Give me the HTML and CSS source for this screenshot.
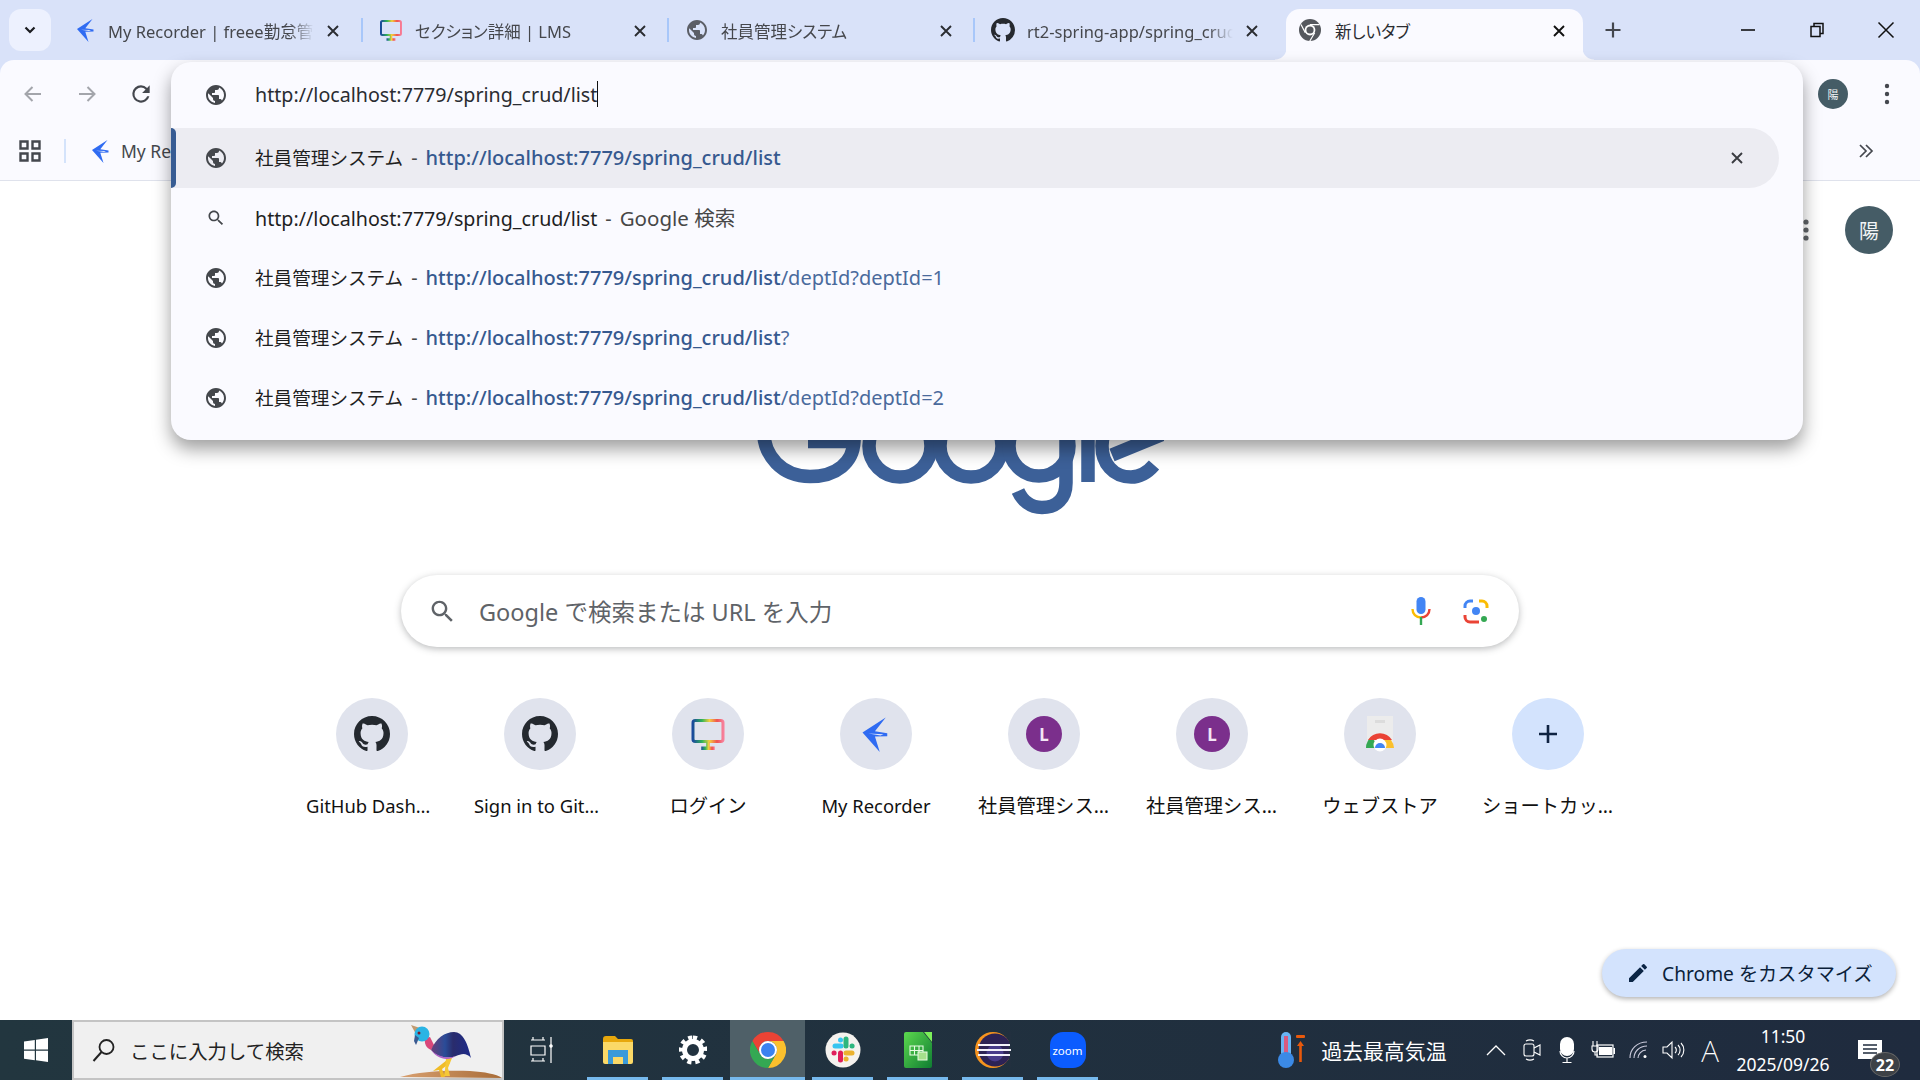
FILE: index.html
```html
<!DOCTYPE html>
<html lang="ja">
<head>
<meta charset="utf-8">
<title>新しいタブ</title>
<link rel="stylesheet" href="styles.css">
</head>
<body>
<svg class="defs" width="0" height="0" aria-hidden="true">
  <symbol id="globe" viewBox="0 0 24 24"><path d="M12 2C6.48 2 2 6.48 2 12s4.48 10 10 10 10-4.48 10-10S17.52 2 12 2zm-1 17.93c-3.95-.49-7-3.85-7-7.93 0-.62.08-1.21.21-1.79L9 15v1c0 1.1.9 2 2 2v1.93zm6.9-2.54c-.26-.81-1-1.39-1.9-1.39h-1v-3c0-.55-.45-1-1-1H8v-2h2c.55 0 1-.45 1-1V7h2c1.1 0 2-.9 2-2v-.41c2.93 1.19 5 4.06 5 7.41 0 2.08-.8 3.97-2.1 5.39z"/></symbol>
  <symbol id="search" viewBox="0 0 24 24"><path d="M15.5 14h-.79l-.28-.27C15.41 12.59 16 11.11 16 9.5 16 5.91 13.09 3 9.5 3S3 5.91 3 9.5 5.91 16 9.5 16c1.61 0 3.09-.59 4.23-1.57l.27.28v.79l5 4.99L20.49 19l-4.99-5zm-6 0C7.01 14 5 11.99 5 9.5S7.01 5 9.5 5 14 7.01 14 9.5 11.99 14 9.5 14z"/></symbol>
  <symbol id="x" viewBox="0 0 14 14"><path d="M2 2l10 10M12 2L2 12" fill="none" stroke="currentColor" stroke-width="1.9"/></symbol>
  <symbol id="github" viewBox="0 0 16 16"><path d="M8 0C3.58 0 0 3.58 0 8c0 3.54 2.29 6.53 5.47 7.59.4.07.55-.17.55-.38 0-.19-.01-.82-.01-1.49-2.01.37-2.53-.49-2.69-.94-.09-.23-.48-.94-.82-1.13-.28-.15-.68-.52-.01-.53.63-.01 1.08.58 1.23.82.72 1.21 1.87.87 2.33.66.07-.52.28-.87.51-1.07-1.78-.2-3.64-.89-3.64-3.95 0-.87.31-1.59.82-2.15-.08-.2-.36-1.02.08-2.12 0 0 .67-.21 2.2.82.64-.18 1.32-.27 2-.27.68 0 1.36.09 2 .27 1.53-1.04 2.2-.82 2.2-.82.44 1.1.16 1.92.08 2.12.51.56.82 1.27.82 2.15 0 3.07-1.87 3.75-3.65 3.95.29.25.54.73.54 1.48 0 1.07-.01 1.93-.01 2.2 0 .21.15.46.55.38A8.013 8.013 0 0016 8c0-4.42-3.58-8-8-8z"/></symbol>
  <symbol id="freee" viewBox="0 0 24 24"><path fill="#2f6bf2" d="M3 11L18.500 1l-7.200 9.200L19.500 11.500v2l-8.200.2L14.500 24z"/><path fill="#dfe8fb" d="M7 11.700l10 .4-2 .9z"/></symbol>
  <symbol id="monitor" viewBox="0 0 24 24"><defs><linearGradient id="rb" x1="0" x2="1" y1="0" y2="0"><stop offset="0" stop-color="#1a4a9c"/><stop offset=".3" stop-color="#2fb457"/><stop offset=".55" stop-color="#f4d03f"/><stop offset=".8" stop-color="#f0524f"/><stop offset="1" stop-color="#f77f9a"/></linearGradient></defs><rect x="2" y="3" width="20" height="14" rx="1.5" fill="none" stroke="url(#rb)" stroke-width="2"/><path d="M12 17v4M7.5 21.500h9" fill="none" stroke="url(#rb)" stroke-width="2.400"/></symbol>
  <symbol id="chrome" viewBox="0 0 36 36"><path fill="#ea4335" d="M18 0A18 18 0 0 0 2.400 9l7.800 13.500A9 9 0 0 1 18 9h15.600A18 18 0 0 0 18 0z"/><path fill="#fbc02d" d="M33.600 9H18a9 9 0 0 1 7.800 13.500L18 36A18 18 0 0 0 33.600 9z"/><path fill="#34a853" d="M2.400 9A18 18 0 0 0 18 36l7.800-13.500a9 9 0 0 1-15.600 0z"/><circle cx="18" cy="18" r="9" fill="#fff"/><circle cx="18" cy="18" r="7" fill="#3b82f0"/></symbol>
</svg>

<header class="tabstrip">
  <button class="tablist" aria-label="タブを検索"><svg width="14" height="14" viewBox="0 0 14 14"><path d="M2.500 4.500L7 9l4.500-4.500" fill="none" stroke="#1b1c20" stroke-width="2.200"/></svg></button>
  <div class="tab">
    <svg class="fav"><use href="#freee"/></svg>
    <span class="tab-title">My Recorder | freee勤怠管理 Plus</span>
    <svg class="tab-x"><use href="#x"/></svg>
  </div>
  <div class="tab">
    <svg class="fav"><use href="#monitor"/></svg>
    <span class="tab-title">セクション詳細 | LMS</span>
    <svg class="tab-x"><use href="#x"/></svg>
  </div>
  <div class="tab">
    <svg class="fav grey"><use href="#globe"/></svg>
    <span class="tab-title">社員管理システム</span>
    <svg class="tab-x"><use href="#x"/></svg>
  </div>
  <div class="tab no-sep">
    <svg class="fav dark"><use href="#github"/></svg>
    <span class="tab-title">rt2-spring-app/spring_crud</span>
    <svg class="tab-x"><use href="#x"/></svg>
  </div>
  <div class="tab active">
    <svg class="fav" viewBox="0 0 24 24"><circle cx="12" cy="12" r="11" fill="#55585e"/><circle cx="12" cy="12" r="5.400" fill="#fff"/><circle cx="12" cy="12" r="3.600" fill="#55585e"/><path d="M12 6.600h9.500M7.300 14.700L3 6.500M16.700 14.700l-5 8.500" stroke="#fff" stroke-width="1.200" fill="none"/></svg>
    <span class="tab-title">新しいタブ</span>
    <svg class="tab-x"><use href="#x"/></svg>
  </div>
  <svg class="newtab" width="20" height="20" viewBox="0 0 20 20"><path d="M10 2.500v15M2.500 10h15" stroke="#44474e" stroke-width="2.200"/></svg>
  <div class="winctl">
    <span class="winbtn"><svg width="14" height="14" viewBox="0 0 14 14"><path d="M0 7h14" stroke="#111" stroke-width="1.600"/></svg></span>
    <span class="winbtn"><svg width="16" height="16" viewBox="0 0 16 16"><path d="M2 4.500h9v10H2zM5 4.500V1.500h9v10h-3" fill="none" stroke="#111" stroke-width="1.500"/></svg></span>
    <span class="winbtn"><svg width="18" height="18" viewBox="0 0 18 18"><path d="M1.500 1.500l15 15M16.500 1.500l-15 15" stroke="#111" stroke-width="1.500"/></svg></span>
  </div>
</header>

<nav class="toolbar">
  <span class="tool"><svg width="24" height="24" viewBox="0 0 24 24"><path d="M20 12H5M11.500 5l-7 7 7 7" fill="none" stroke="#a3a5ab" stroke-width="2"/></svg></span>
  <span class="tool"><svg width="24" height="24" viewBox="0 0 24 24"><path d="M4 12h15M12.500 5l7 7-7 7" fill="none" stroke="#a3a5ab" stroke-width="2"/></svg></span>
  <span class="tool"><svg width="26" height="26" viewBox="0 0 24 24"><path fill="#44474e" d="M17.650 6.350A7.958 7.958 0 0 0 12 4a8 8 0 1 0 7.730 10h-2.080A6 6 0 1 1 12 6c1.660 0 3.140.69 4.220 1.780L13 11h7V4l-2.350 2.350z"/></svg></span>
  <div class="tool-end">
    <span class="tool"><span class="avatar small">陽</span></span>
    <span class="tool"><svg width="6" height="22" viewBox="0 0 6 22"><circle cx="3" cy="3" r="2.200" fill="#44474e"/><circle cx="3" cy="11" r="2.200" fill="#44474e"/><circle cx="3" cy="19" r="2.200" fill="#44474e"/></svg></span>
  </div>
</nav>

<nav class="bookmarks">
  <svg class="apps" width="22" height="22" viewBox="0 0 22 22"><path d="M1.500 1.500h7v7h-7zM13.500 1.500h7v7h-7zM1.500 13.500h7v7h-7zM13.500 13.500h7v7h-7z" fill="none" stroke="#44474e" stroke-width="2.400"/></svg>
  <span class="bm-sep"></span>
  <svg class="bm-fav" width="24" height="24"><use href="#freee"/></svg>
  <span class="bm-label">My Recorder</span>
  <svg class="more" width="18" height="18" viewBox="0 0 18 18"><path d="M3 3l6 6-6 6M9 3l6 6-6 6" fill="none" stroke="#44474e" stroke-width="1.700"/></svg>
</nav>

<main class="ntp">
  <div class="ntp-top">
    <svg width="6" height="24" viewBox="0 0 6 24"><circle cx="3" cy="4" r="2.600" fill="#5f6368"/><circle cx="3" cy="12" r="2.600" fill="#5f6368"/><circle cx="3" cy="20" r="2.600" fill="#5f6368"/></svg>
    <span class="avatar large">陽</span>
  </div>
  <svg class="logo" width="407" height="138" viewBox="755 377 407 138" aria-label="Google" fill="none" stroke="#3c6098" stroke-width="13.500">
    <path d="M806 441.500H852C851 462 835 476.500 808 476.500C780 476.500 761.500 456 761.500 430C761.500 404 780 383.500 808 383.500C822 383.500 833 388 842 396"/>
    <circle cx="898" cy="446" r="31"/>
    <circle cx="969" cy="446" r="31"/>
    <circle cx="1037" cy="446" r="30"/>
    <path d="M1064 416V483C1064 498 1055 507.500 1040 507.500C1028 507.500 1020 500 1016 491"/>
    <path d="M1086 378V482"/>
    <path d="M1152 465C1146 472 1139 477 1129 477C1111 477 1100 463 1100 446C1100 429 1111 415 1128 415C1143 415 1150 425 1154 437L1110 455"/>
  </svg>
  <div class="searchbox">
    <svg class="sb-icon" width="29" height="29"><use href="#search"/></svg>
    <span class="sb-text">Google で検索または URL を入力</span>
    <svg class="sb-mic" width="20" height="28" viewBox="0 0 20 28"><rect x="5.500" y="0" width="9" height="17" rx="4.500" fill="#4285f4"/><path d="M1.500 12c0 5 3.500 8.500 8.500 8.500" fill="none" stroke="#fbbc04" stroke-width="2.400"/><path d="M18.500 12c0 5-3.500 8.500-8.500 8.500" fill="none" stroke="#ea4335" stroke-width="2.400"/><path d="M10 20v8" stroke="#34a853" stroke-width="2.400"/></svg>
    <svg class="sb-lens" width="26" height="26" viewBox="0 0 26 26" fill="none" stroke-width="3"><path d="M2 10V8a5 5 0 0 1 5-5h3" stroke="#4285f4"/><path d="M16 3h3a5 5 0 0 1 5 5v2" stroke="#fbbc04"/><path d="M10 24H7a5 5 0 0 1-5-5v-2" stroke="#ea4335"/><path d="M10 24h6" stroke="#ea4335"/><circle cx="13" cy="13" r="4" fill="#4285f4" stroke="none"/><circle cx="21" cy="21" r="3" fill="#34a853" stroke="none"/></svg>
  </div>
  <div class="shortcuts">
    <div class="tile"><span class="tile-ico"><svg class="tile-svg dark"><use href="#github"/></svg></span><span class="tile-label">GitHub Dashboard</span></div>
    <div class="tile"><span class="tile-ico"><svg class="tile-svg dark"><use href="#github"/></svg></span><span class="tile-label">Sign in to GitHub</span></div>
    <div class="tile"><span class="tile-ico"><svg class="tile-svg"><use href="#monitor"/></svg></span><span class="tile-label jp">ログイン</span></div>
    <div class="tile"><span class="tile-ico"><svg class="tile-svg"><use href="#freee"/></svg></span><span class="tile-label">My Recorder</span></div>
    <div class="tile"><span class="tile-ico"><span class="letter">L</span></span><span class="tile-label jp">社員管理システム一覧</span></div>
    <div class="tile"><span class="tile-ico"><span class="letter">L</span></span><span class="tile-label jp">社員管理システム一覧</span></div>
    <div class="tile"><span class="tile-ico"><svg class="tile-svg" viewBox="0 0 36 36"><path fill="#ececec" d="M5 0h26v32H5z"/><path fill="#dcdcdc" d="M13 4h10v3H13z"/><path fill="#34a853" d="M4 32a14 14 0 0 1 6-11.500L16 32z"/><path fill="#ea4335" d="M6 24a14 14 0 0 1 24 0H18z"/><path fill="#fbc02d" d="M32 32a14 14 0 0 0-3-8H18l6 8z"/><circle cx="18" cy="29" r="6.500" fill="#fff"/><path fill="#4285f4" d="M13 32a5 5 0 0 1 10 0z"/></svg></span><span class="tile-label jp">ウェブストア</span></div>
    <div class="tile"><span class="tile-ico add"><svg width="24" height="24" viewBox="0 0 24 24"><path d="M12 3v18M3 12h18" stroke="#0f2342" stroke-width="2.600"/></svg></span><span class="tile-label jp">ショートカットを追加</span></div>
  </div>
  <div class="customize">
    <svg width="24" height="24" viewBox="0 0 24 24"><path fill="#0b2545" d="M3 17.250V21h3.750L17.810 9.940l-3.750-3.750L3 17.250zM20.710 7.040a1 1 0 0 0 0-1.410l-2.340-2.340a1 1 0 0 0-1.410 0l-1.830 1.830 3.750 3.750 1.830-1.830z"/></svg>
    <span>Chrome をカスタマイズ</span>
  </div>
</main>

<footer class="taskbar">
  <span class="start"><svg width="24" height="24" viewBox="0 0 24 24"><path fill="#fff" d="M0 3.400L10.800 1.900V11.500H0zM12 1.700L24 0V11.500H12zM0 12.700H10.800V22.300L0 20.700zM12 12.700H24V24L12 22.300z"/></svg></span>
  <div class="winsearch">
    <svg width="26" height="26" viewBox="0 0 26 26"><circle cx="15.500" cy="10" r="7" fill="none" stroke="#222" stroke-width="1.800"/><path d="M10.500 15L2.500 24" stroke="#222" stroke-width="2"/></svg>
    <span class="ws-text">ここに入力して検索</span>
    <svg class="bird" width="102" height="56" viewBox="0 2 102 56">
      <defs>
        <linearGradient id="bodyg" x1="0" x2="1" y1="0" y2="0"><stop offset="0" stop-color="#6a3f78"/><stop offset=".35" stop-color="#2a4c98"/><stop offset=".55" stop-color="#2a2c6c"/><stop offset="1" stop-color="#1c2a8a"/></linearGradient>
        <linearGradient id="moundg" x1="0" x2="1" y1="0" y2="0"><stop offset="0" stop-color="#d8a070"/><stop offset="1" stop-color="#a86c38"/></linearGradient>
      </defs>
      <path d="M0 57C20 51 50 50 70 51C85 52 96 54 102 58z" fill="url(#moundg)"/>
      <path d="M47 40l3 3-8 6 3 8h-4l-2-7-6 1z" fill="#f0bc28"/>
      <path d="M52 38l-4 10 2 8h-6l1-6 1-12z" fill="#f5c836"/>
      <path d="M25 18c-1 5 1 10 6 12l3-5-4-8z" fill="#d9487a"/>
      <path d="M31 30C36 18 45 12 54 12C63 12 68 24 71 38C66 32 61 34 56 36C48 39 38 38 31 30z" fill="url(#bodyg)"/>
      <path d="M31 30C38 37 48 39 56 36L52 38C44 41 36 37 31 30z" fill="#b060c8"/>
      <path d="M11 5l12 4-6 7z" fill="#c09a70"/>
      <circle cx="22" cy="14" r="7.500" fill="#2ab4e4"/>
      <path d="M15 15l4 3-3 7-2-4z" fill="#3a5a90"/>
      <circle cx="19" cy="13" r="1.500" fill="#7a1a2a"/>
    </svg>
  </div>
  <span class="taskview"><svg width="24" height="26" viewBox="0 0 24 26" fill="none" stroke="#fff" stroke-width="1.200"><path d="M1 3h14M3 3V0M13 3V0M1 9h14v9H1zM1 24h14M3 24v-3M13 24v-3M21 0v26"/><circle cx="21" cy="9" r="1.200" fill="#fff"/></svg></span>
  <span class="tb-app"><svg width="32" height="30" viewBox="0 0 32 30"><path fill="#e8a80c" d="M1 4a3 3 0 0 1 3-3h9l3 3h13a2 2 0 0 1 2 2v4H1z"/><path fill="#fbd967" d="M1 7h30v20a2 2 0 0 1-2 2H3a2 2 0 0 1-2-2z"/><path fill="#3a9ad9" d="M6 15h20v14h-5v-7H11v7H6z"/></svg></span>
  <span class="tb-app"><svg width="28" height="30" viewBox="0 0 28 30"><path fill="none" stroke="#fff" stroke-width="5" d="M14 6.500a8.500 8.500 0 1 0 0 17 8.500 8.500 0 0 0 0-17z"/><path stroke="#fff" stroke-width="5" stroke-dasharray="4 3.800" fill="none" d="M14 3a12 12 0 1 1 0 24 12 12 0 0 1 0-24z"/></svg></span>
  <span class="tb-app current"><svg width="36" height="36"><use href="#chrome"/></svg></span>
  <span class="tb-app"><svg width="36" height="36" viewBox="0 0 36 36"><circle cx="18" cy="18" r="17.500" fill="#f5f2ee"/><g stroke-width="5" stroke-linecap="round" fill="none"><path d="M10 14h6" stroke="#36c5f0"/><path d="M15.500 8v.1" stroke="#36c5f0"/><path d="M21 7v7" stroke="#2eb67d"/><path d="M27 14h.1" stroke="#2eb67d"/><path d="M21 21h6" stroke="#ecb22e"/><path d="M21 27h.1" stroke="#ecb22e"/><path d="M15.500 21v7" stroke="#e01e5a"/><path d="M9 21h.1" stroke="#e01e5a"/></g></svg></span>
  <span class="tb-app"><svg width="28" height="36" viewBox="0 0 28 36"><defs><linearGradient id="calc" x1="0" x2="1" y1="0" y2="1"><stop offset="0" stop-color="#5cd84e"/><stop offset="1" stop-color="#0f7d32"/></linearGradient></defs><path fill="url(#calc)" d="M2 0h17l9 11v23a2 2 0 0 1-2 2H2a2 2 0 0 1-2-2V2a2 2 0 0 1 2-2z"/><path fill="#7cf05a" d="M20 0h8v10z"/><path d="M6 14h13v9H6zM6 18.500h13M10.500 14v9M15 14v9" fill="none" stroke="#e8fbe3" stroke-width="1.100"/><rect x="14" y="20" width="9" height="8" fill="#a5e08c" stroke="#e8fbe3"/></svg></span>
  <span class="tb-app"><svg width="36" height="36" viewBox="0 0 36 36"><circle cx="18" cy="18" r="18" fill="#f7941e"/><circle cx="20" cy="18" r="16.500" fill="#2c2255"/><rect x="34" y="0" width="2" height="36" fill="#22303f"/><circle cx="20" cy="21" r="8.500" fill="#473a8a"/><path d="M3 13h32M2 18h34M3 23h32" stroke="#f2f0fa" stroke-width="1.800"/></svg></span>
  <span class="tb-app"><span class="zoomapp">zoom</span></span>

  <div class="tray">
    <svg class="thermo" width="30" height="38" viewBox="0 0 30 38"><rect x="5" y="1" width="10" height="26" rx="5" fill="#6ab4f4"/><rect x="8" y="5" width="4" height="20" fill="#d85a80"/><circle cx="10" cy="29" r="8" fill="#3b8ae6"/><rect x="20" y="4" width="9" height="3" rx="1" fill="#e8590c"/><path d="M24.500 10l3.500 5h-2.200v16h-2.600V15H21z" fill="#e8590c"/></svg>
    <span class="weather">過去最高気温</span>
    <div class="tray-icons">
      <span class="tray-slot"><svg width="20" height="12" viewBox="0 0 20 12"><path d="M1 11l9-9 9 9" fill="none" stroke="#fff" stroke-width="1.300"/></svg></span>
      <span class="tray-slot"><svg width="18" height="24" viewBox="0 0 18 24" fill="none" stroke="#fff" stroke-width="1.100"><rect x="1" y="6" width="10" height="12" rx="2"/><path d="M11 10l6-3v10l-6-3M3 3a8 8 0 0 1 8 0M3 21a8 8 0 0 0 8 0"/></svg></span>
      <span class="tray-slot"><svg width="16" height="26" viewBox="0 0 16 26"><rect x="1" y="0" width="14" height="19" rx="7" fill="#fff"/><path d="M1 14a7 7 0 0 0 14 0M8 21v4M3.500 25.500h9" fill="none" stroke="#fff" stroke-width="1.200"/></svg></span>
      <span class="tray-slot"><svg width="24" height="18" viewBox="0 0 24 18"><path d="M2 0v5M6 0v5M1 5h6v3a3 3 0 0 1-6 0zM4 11v3h3" fill="none" stroke="#fff" stroke-width="1.100"/><rect x="6" y="4" width="16" height="12" fill="none" stroke="#fff" stroke-width="1.200"/><rect x="8" y="6" width="13" height="8" fill="#fff"/><rect x="22.500" y="7" width="1.500" height="6" fill="#fff"/></svg></span>
      <span class="tray-slot"><svg width="20" height="18" viewBox="0 0 20 18" fill="none" stroke="#ccd" stroke-width="1.100"><path d="M1 17C1 8 8 1 18 1M5 17C5 11 10 5 18 5M9 17c0-3 3-8 8-8"/><circle cx="16" cy="15.500" r="1.500" fill="#fff" stroke="none"/></svg></span>
      <span class="tray-slot"><svg width="24" height="20" viewBox="0 0 24 20" fill="none" stroke="#fff" stroke-width="1.100"><path d="M1 7h4l5-5v16l-5-5H1zM13 7a4 4 0 0 1 0 6M16 5a7 7 0 0 1 0 10M19 3a10 10 0 0 1 0 14"/></svg></span>
      <span class="tray-slot ime">A</span>
    </div>
    <div class="clock"><span>11:50</span><span>2025/09/26</span></div>
    <div class="notify">
      <svg width="24" height="20" viewBox="0 0 24 20"><path fill="#fff" d="M0 0h24v19H0z"/><path d="M5 5h14M5 9h14M5 13h14" stroke="#1f2b3d" stroke-width="1.600"/></svg>
      <span class="badge">22</span>
    </div>
  </div>
</footer>

<section class="omnibox">
  <div class="omni-input">
    <svg class="omni-ico"><use href="#globe"/></svg>
    <span class="omni-typed">http://localhost:7779/spring_crud/list</span><span class="caret"></span>
  </div>
  <div class="omni-row selected">
    <svg class="omni-ico"><use href="#globe"/></svg>
    <span class="omni-text"><span class="ttl">社員管理システム</span><i class="dash">-</i><b>http://localhost:7779/spring_crud/list</b></span>
    <svg class="omni-x"><use href="#x"/></svg>
  </div>
  <div class="omni-row">
    <svg class="omni-ico small"><use href="#search"/></svg>
    <span class="omni-text">http://localhost:7779/spring_crud/list<i class="dash">-</i><i class="desc">Google 検索</i></span>
  </div>
  <div class="omni-row">
    <svg class="omni-ico"><use href="#globe"/></svg>
    <span class="omni-text"><span class="ttl">社員管理システム</span><i class="dash">-</i><b>http://localhost:7779/spring_crud/list</b><em>/deptId?deptId=1</em></span>
  </div>
  <div class="omni-row">
    <svg class="omni-ico"><use href="#globe"/></svg>
    <span class="omni-text"><span class="ttl">社員管理システム</span><i class="dash">-</i><b>http://localhost:7779/spring_crud/list</b><em>?</em></span>
  </div>
  <div class="omni-row">
    <svg class="omni-ico"><use href="#globe"/></svg>
    <span class="omni-text"><span class="ttl">社員管理システム</span><i class="dash">-</i><b>http://localhost:7779/spring_crud/list</b><em>/deptId?deptId=2</em></span>
  </div>
</section>
</body>
</html>
```
FILE: styles.css
```css
* { box-sizing: border-box; }
html, body { margin: 0; height: 100%; }
body {
  width: 1920px; height: 1080px; overflow: hidden; position: relative;
  display: flex; flex-direction: column;
  background: #d9e2f9; color: #1f1f1f;
  font-family: "Noto Sans", "Noto Sans CJK JP", sans-serif; font-size: 17.5px;
}
.defs { position: absolute; }

/* tab strip */
.tabstrip { height: 60px; flex: none; display: flex; align-items: flex-start; padding: 9px 0 0 9px; }
.tablist { width: 42px; height: 42px; flex: none; margin-right: 7px; border: 0; border-radius: 12px; background: #edf1fe; display: flex; align-items: center; justify-content: center; padding: 0; }
.tab { width: 306px; height: 42px; flex: none; display: flex; align-items: center; padding-left: 16px; position: relative; }
.tab::after { content: ""; position: absolute; right: 0; top: 9px; width: 2px; height: 24px; background: #a8c7fa; }
.tab.no-sep::after { display: none; }
.tab:first-of-type { width: 305px; }
.tab:first-of-type .tab-title { margin-left: -2px; }
.fav { width: 24px; height: 24px; flex: none; margin-right: 12px; }
.fav.grey { fill: #5b5e66; }
.fav.dark { fill: #26292f; }
.tab-title { width: 206px; flex: none; white-space: nowrap; overflow: hidden; color: #45474c; font-size: 16.5px; padding-top: 2px; font-feature-settings: "palt"; -webkit-mask-image: linear-gradient(90deg, #000 88%, transparent); mask-image: linear-gradient(90deg, #000 88%, transparent); }
.tab-x { width: 14px; height: 14px; flex: none; margin-left: 12px; margin-top: 1px; color: #2a2c31; }
.tab.active { width: 297px; height: 51px; margin-left: 5px; margin-top: 0; padding-left: 12px; background: #fafaff; border-radius: 14px 14px 0 0; align-items: center; padding-bottom: 9px; }
.tab.active::after { display: none; }
.tab.active::before { content: ""; position: absolute; left: -11px; right: -11px; bottom: 0; height: 12px; background: radial-gradient(circle at 0 0, #d9e2f9 11px, transparent 12px) left top / 12px 12px no-repeat, radial-gradient(circle at 100% 0, #d9e2f9 11px, transparent 12px) right top / 12px 12px no-repeat, linear-gradient(#fafaff, #fafaff); z-index: -1; }
.tab.active .tab-x { margin-left: 13px; color: #111; }
.tab.active .tab-title { width: 204px; color: #2a2c31; -webkit-mask-image: none; mask-image: none; margin-left: 1px; }
.newtab { margin: 11px 0 0 20px; flex: none; }
.winctl { margin-left: auto; display: flex; margin-top: -9px; }
.winbtn { width: 69px; height: 60px; display: flex; align-items: center; justify-content: center; }

/* toolbar */
.toolbar { height: 60px; flex: none; display: flex; align-items: center; padding: 8px 6px 0; background: #fafaff; border-radius: 14px 14px 0 0; position: relative; }
.tool { width: 54px; height: 52px; display: flex; align-items: center; justify-content: center; }
.tool-end { margin-left: auto; display: flex; }
.avatar { display: flex; align-items: center; justify-content: center; border-radius: 50%; background: #455c66; color: #f2f4f6; }
.avatar.small { width: 30px; height: 30px; font-size: 11px; }
.avatar.large { width: 48px; height: 48px; font-size: 20px; margin-left: 36px; }

.bookmarks { height: 61px; flex: none; display: flex; align-items: center; padding: 2px 45px 0 19px; background: #fafaff; border-bottom: 1px solid #dfe2ec; }
.bm-sep { width: 2px; height: 24px; background: #d4e3fb; margin: 0 0 0 23px; }
.bm-fav { margin-left: 23px; }
.bm-label { margin-left: 8px; color: #44474c; }
.more { margin-left: auto; }

/* new tab page */
.ntp { flex: 1; background: #fff; display: flex; flex-direction: column; align-items: center; padding-top: 25px; }
.ntp-top { height: 48px; flex: none; align-self: flex-end; display: flex; align-items: center; margin-right: 27px; }
.logo { flex: none; margin-top: 123px; }
.searchbox { width: 1118px; height: 72px; flex: none; margin-top: 60px; border-radius: 36px; background: #fff; box-shadow: 0 2px 7px rgba(60,64,67,.35); display: flex; align-items: center; padding: 0 30px 0 27px; }
.sb-icon { fill: #5f6368; flex: none; }
.sb-text { margin-left: 22px; font-size: 23.5px; color: #5f6368; }
.sb-mic { margin-left: auto; flex: none; }
.sb-lens { margin-left: 32px; flex: none; }
.shortcuts { display: flex; flex: none; margin-top: 51px; }
.tile { width: 168px; flex: none; display: flex; flex-direction: column; align-items: center; }
.tile-ico { width: 72px; height: 72px; border-radius: 50%; background: #e0e3ed; display: flex; align-items: center; justify-content: center; }
.tile-ico.add { background: #d3e3fd; }
.tile-svg { width: 36px; height: 36px; }
.tile-svg.dark { fill: #24292f; }
.letter { width: 36px; height: 36px; border-radius: 50%; background: #7b2f8c; color: #f3e5f5; font-size: 17px; font-weight: 700; display: flex; align-items: center; justify-content: center; }
.tile-label { width: 132px; margin-top: 24px; line-height: 24px; font-size: 18.4px; color: #111; text-align: center; white-space: nowrap; overflow: hidden; text-overflow: ellipsis; }
.tile-label.jp { font-size: 19.3px; }
.customize { margin-top: auto; margin-bottom: 23px; margin-right: 24px; align-self: flex-end; height: 48px; width: 294px; flex: none; border-radius: 24px; background: #d3e3fd; color: #0b1f3a; display: flex; align-items: center; padding-left: 24px; gap: 12px; box-shadow: 0 2px 5px rgba(0,0,0,.3); font-size: 19.2px; }

/* taskbar */
.taskbar { height: 60px; flex: none; display: flex; align-items: stretch; background: linear-gradient(90deg, #22363f, #1f2b3e); color: #fff; }
.start { width: 72px; flex: none; display: flex; align-items: center; justify-content: center; }
.winsearch { width: 432px; flex: none; position: relative; display: flex; align-items: center; padding-left: 17px; background: #f0f0f0; border: 2px solid #c4c4c4; color: #222; overflow: hidden; }
.ws-text { margin-left: 13px; font-size: 19.4px; }
.bird { position: absolute; right: 0; top: 0; }
.taskview { width: 76px; flex: none; display: flex; align-items: center; justify-content: center; }
.tb-app { width: 75px; flex: none; display: flex; align-items: center; justify-content: center; position: relative; }
.tb-app::after { content: ""; position: absolute; left: 7px; right: 7px; bottom: 0; height: 3px; background: #76b9ed; }
.tb-app.current { background: #4f6068; }
.tb-app.current::after { left: 0; right: 0; }
.zoomapp { width: 36px; height: 36px; border-radius: 13px; background: #0b5cff; color: #fff; font-size: 11.5px; display: flex; align-items: center; justify-content: center; }
.tray { margin-left: auto; display: flex; align-items: center; padding-right: 18px; }
.thermo { flex: none; }
.weather { margin-left: 15px; font-size: 20.9px; width: 126px; white-space: nowrap; }
.tray-icons { display: flex; margin-left: 31px; }
.tray-slot { width: 35.700px; display: flex; align-items: center; justify-content: center; }
.ime { font-size: 30px; font-weight: 200; }
.clock { width: 110px; display: flex; flex-direction: column; align-items: center; font-size: 17.500px; line-height: 28px; }
.notify { width: 64px; position: relative; display: flex; justify-content: center; }
.badge { position: absolute; left: 32px; top: 12px; width: 30px; height: 25px; border-radius: 50%; background: #3d4146; border: 1px solid #666; color: #fff; font-size: 16px; font-weight: 700; display: flex; align-items: center; justify-content: center; }

/* omnibox popup */
.omnibox { position: absolute; left: 171px; top: 62px; width: 1632px; height: 378px; border-radius: 20px; background: #fafaff; box-shadow: 0 9px 18px rgba(0,0,0,.38); font-size: 19.67px; overflow: hidden; }
.omni-input { height: 66px; display: flex; align-items: center; padding-left: 33px; }
.omni-row { height: 60px; display: flex; align-items: center; padding-left: 33px; position: relative; margin-right: 24px; }
.omni-ico { width: 24px; height: 24px; flex: none; fill: #44474c; margin-right: 27px; }
.omni-ico.small { width: 20px; height: 20px; margin: 0 29px 0 2px; }
.omni-typed { color: #2a2c31; padding-bottom: 2px; }
.caret { width: 1px; height: 26px; background: #111; margin-bottom: 2px; }
.omni-row.selected { background: #ececf2; border-radius: 0 30px 30px 0; }
.omni-row.selected::before { content: ""; position: absolute; left: 0; top: 0; bottom: 0; width: 5px; background: #375c93; border-radius: 0 5px 5px 0; }
.omni-text { color: #1f1f1f; white-space: nowrap; line-height: 24px; }
.ttl { font-size: 18.6px; }
.omni-text b { font-weight: 500; font-size: 20px; color: #36598f; }
.omni-text em { font-style: normal; font-size: 20px; color: #4a6a9c; }
.dash { font-style: normal; color: #474747; margin: 0 8px; }
.desc { font-style: normal; color: #474747; font-size: 20.5px; }
.omni-x { width: 14px; height: 14px; color: #3a3c41; margin-left: auto; margin-right: 35px; }
```
